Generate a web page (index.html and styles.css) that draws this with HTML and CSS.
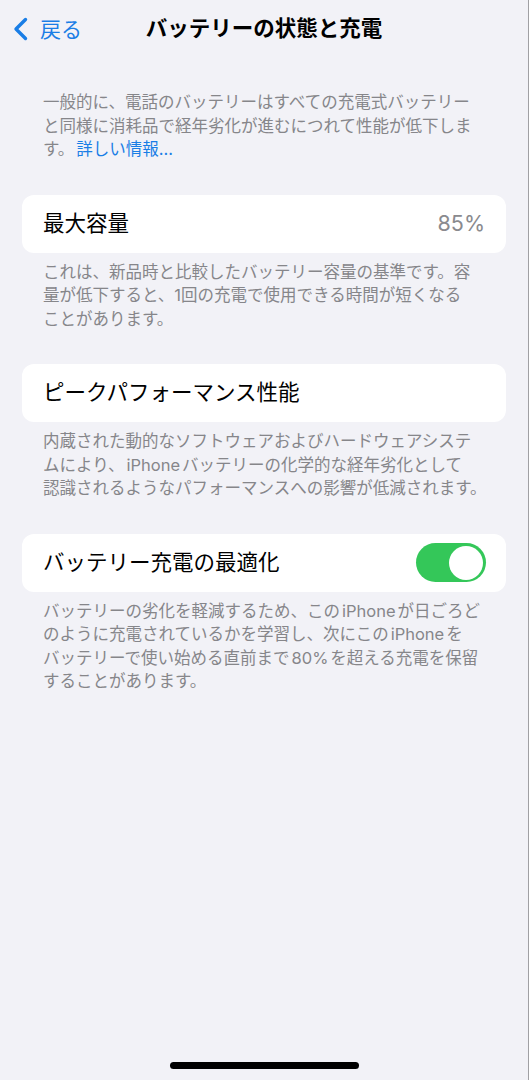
FILE: index.html
```html
<!DOCTYPE html>
<html lang="ja">
<head>
<meta charset="utf-8">
<title>バッテリーの状態と充電</title>
<link rel="stylesheet" href="styles.css">
</head>
<body>
<div class="screen">
  <header class="nav">
    <a class="back">
      <svg class="chev" width="17" height="24" viewBox="0 0 17 24"><path d="M13.5 2.5 L4 12 L13.5 21.5" fill="none" stroke="currentColor" stroke-width="3.4" stroke-linecap="round" stroke-linejoin="round"/></svg>
      <span>戻る</span>
    </a>
    <h1 class="title">バッテリーの状態と充電</h1>
    <div></div>
  </header>
  <main class="content">
    <p class="note intro">一般的に、電話のバッテリーはすべての充電式バッテリー<br>と同様に消耗品で経年劣化が進むにつれて性能が低下しま<br>す。<span class="link">詳しい情報...</span></p>

    <div class="card"><span class="label">最大容量</span><span class="value">85%</span></div>
    <p class="note">これは、新品時と比較したバッテリー容量の基準です。容<br>量が低下すると、1回の充電で使用できる時間が短くなる<br>ことがあります。</p>

    <div class="card"><span class="label">ピークパフォーマンス性能</span></div>
    <p class="note">内蔵された動的なソフトウェアおよびハードウェアシステ<br>ムにより、<span class="lat">iPhone</span>バッテリーの化学的な経年劣化として<br>認識されるようなパフォーマンスへの影響が低減されます。</p>

    <div class="card"><span class="label">バッテリー充電の最適化</span><span class="toggle on"><span class="knob"></span></span></div>
    <p class="note">バッテリーの劣化を軽減するため、この<span class="lat">iPhone</span>が日ごろど<br>のように充電されているかを学習し、次にこの<span class="lat">iPhone</span>を<br>バッテリーで使い始める直前まで<span class="lat">80%</span>を超える充電を保留<br>することがあります。</p>
  </main>
  <div class="home-indicator"></div>
</div>
</body>
</html>
```
FILE: styles.css
```css
html, body {
  margin: 0;
  padding: 0;
  background: #f2f2f7;
}
body {
  font-family: "Inter", "Noto Sans CJK JP", sans-serif;
  color: #000;
}
.screen {
  width: 529px;
  height: 1080px;
  box-sizing: border-box;
  border-right: 1px solid #a0a0a4;
  display: flex;
  flex-direction: column;
  overflow: hidden;
}
.nav {
  height: 58px;
  display: grid;
  grid-template-columns: 1fr auto 1fr;
  align-items: center;
}
.back {
  display: flex;
  align-items: center;
  gap: 11px;
  padding-left: 12px;
  color: #1a7ee6;
  font-size: 21px;
  line-height: 1;
}
.chev { display: block; }
.title {
  margin: 0;
  font-size: 21.5px;
  font-weight: 700;
  line-height: 1;
  white-space: nowrap;
}
.content {
  padding: 33px 22px 0;
}
.note {
  margin: 8px 0 0;
  padding: 0 21px;
  font-size: 16.5px;
  line-height: 23.5px;
  color: #86868a;
  white-space: nowrap;
}
.note.intro { margin-top: 0; }
.link { color: #1a7ee6; margin-left: 2px; }
.lat { margin: 0 2px; }
.card {
  margin-top: 33px;
  height: 58px;
  box-sizing: border-box;
  background: #fff;
  border-radius: 12px;
  padding: 0 21px;
  display: flex;
  align-items: center;
  justify-content: space-between;
}
.label {
  font-size: 21.5px;
  line-height: 1;
}
.value {
  font-size: 21.5px;
  color: #8a8a8e;
  line-height: 1;
}
.toggle {
  width: 70px;
  height: 39px;
  border-radius: 20px;
  background: #34c759;
  display: flex;
  align-items: center;
  justify-content: flex-end;
  padding: 0 3px;
  box-sizing: border-box;
  margin-right: -1px;
}
.knob {
  width: 34px;
  height: 34px;
  border-radius: 50%;
  background: #fff;
}
.home-indicator {
  margin: auto auto 11px;
  width: 189px;
  height: 7px;
  border-radius: 4px;
  background: #000;
}
```
